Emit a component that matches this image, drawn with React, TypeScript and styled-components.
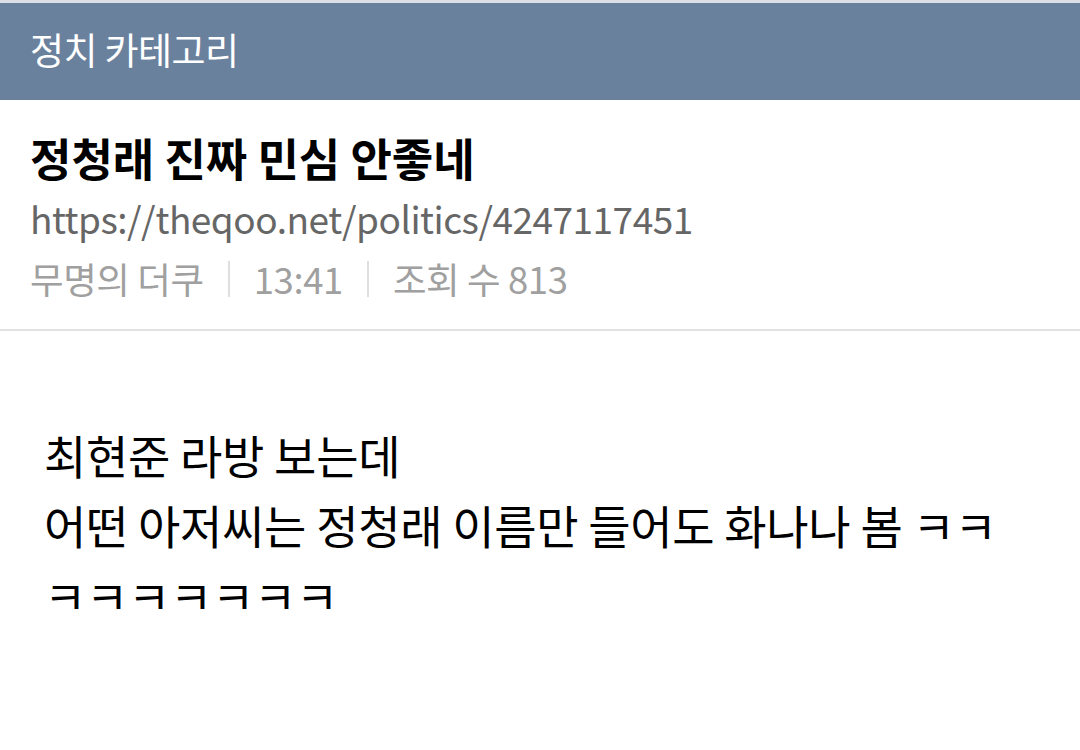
import React from "react";
import styled, { createGlobalStyle } from "styled-components";

const Global = createGlobalStyle`
  html, body { margin: 0; padding: 0; background: #fff; }
  body { font-family: "Noto Sans CJK KR", "Noto Sans", sans-serif; }
`;

const Page = styled.div`
  width: 1080px;
  min-height: 750px;
  background: #fff;
  border-top: 3px solid #dcdfe3;
`;

const Header = styled.header`
  height: 97px;
  background: #6a819d;
  display: flex;
  align-items: center;
  padding: 0 30px;
  box-sizing: border-box;
`;

const HeaderTitle = styled.h1`
  margin: 0;
  color: #fff;
  font-size: 37px;
  font-weight: 400;
  letter-spacing: -0.6px;
  line-height: 1;
  margin-top: -4px;
`;

const Info = styled.section`
  padding: 28px 30px 19px;
  border-bottom: 2px solid #e2e2e2;
`;

const Title = styled.h2`
  margin: 0;
  font-size: 45px;
  font-weight: 700;
  color: #000;
  line-height: 60px;
  letter-spacing: 0;
`;

const Url = styled.div`
  font-size: 37px;
  color: #666;
  line-height: 60px;
  letter-spacing: -0.5px;
`;

const Meta = styled.div`
  display: flex;
  align-items: center;
  font-size: 36.5px;
  color: #a0a0a0;
  line-height: 62px;
  letter-spacing: -0.4px;
`;

const Sep = styled.span`
  width: 2px;
  height: 36px;
  background: #dedede;
  margin: 0 24px;
`;

const Body = styled.article`
  padding: 88px 44px 0;
  font-size: 46px;
  line-height: 70px;
  color: #000;
  letter-spacing: -0.3px;
`;

export default function App() {
  return (
    <>
      <Global />
      <Page>
        <Header>
          <HeaderTitle>정치 카테고리</HeaderTitle>
        </Header>
        <Info>
          <Title>정청래 진짜 민심 안좋네</Title>
          <Url>https://theqoo.net/politics/4247117451</Url>
          <Meta>
            <span>무명의 더쿠</span>
            <Sep />
            <span>13:41</span>
            <Sep />
            <span>조회 수 813</span>
          </Meta>
        </Info>
        <Body>
          최현준 라방 보는데
          <br />
          어떤 아저씨는 정청래 이름만 들어도 화나나 봄 ㅋㅋ
          <br />
          ㅋㅋㅋㅋㅋㅋㅋ
        </Body>
      </Page>
    </>
  );
}
